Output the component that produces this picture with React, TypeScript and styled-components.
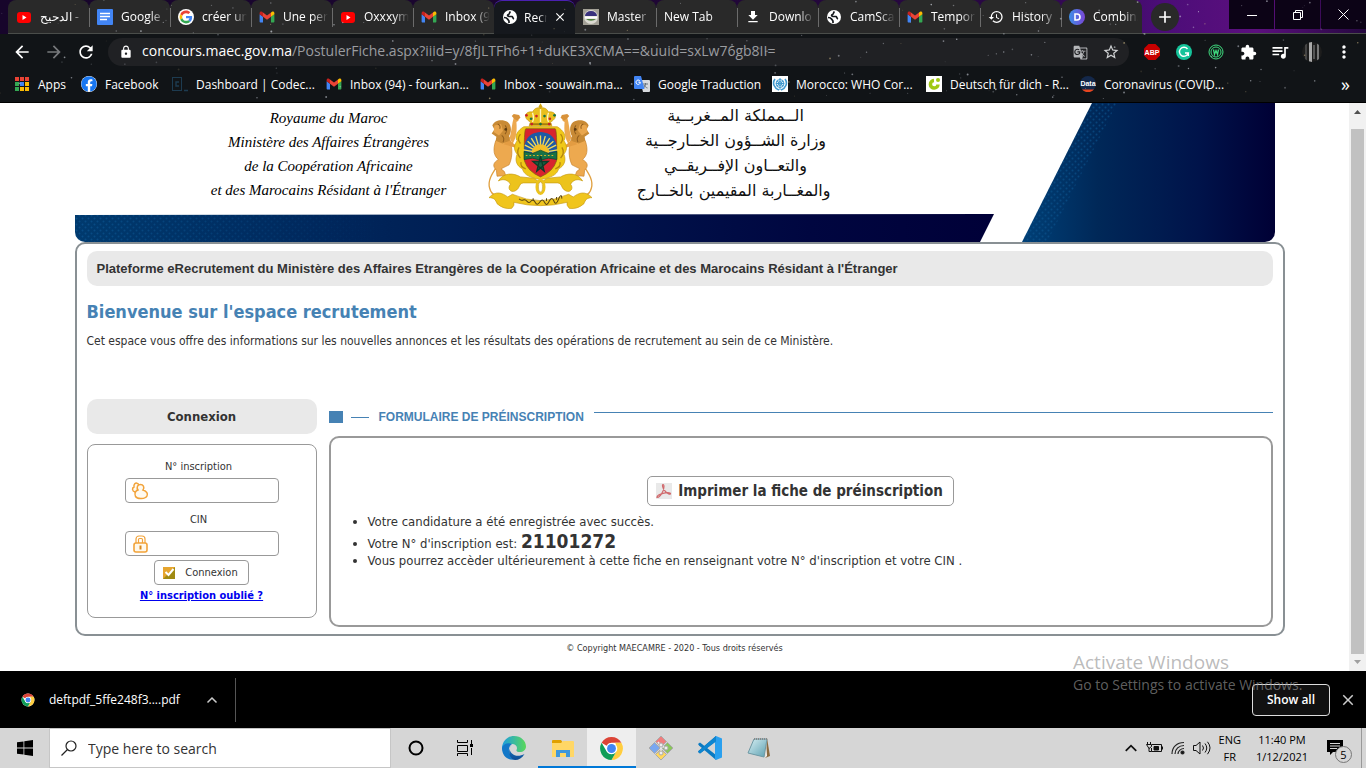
import React from 'react';
import styled, { createGlobalStyle, css } from 'styled-components';
import {
  MdLock, MdRefresh, MdArrowBack, MdArrowForward, MdStarBorder, MdGTranslate,
  MdExtension, MdQueueMusic, MdHistory, MdDownload, MdClose, MdAdd, MdMoreVert,
} from 'react-icons/md';
import { FaFacebook } from 'react-icons/fa';

const ui = '"Open Sans", "Noto Sans", sans-serif';
const tahoma = '"DejaVu Sans Condensed", "DejaVu Sans", sans-serif';
const arial = '"Liberation Sans", Arial, sans-serif';

const GlobalStyle = createGlobalStyle`
  * { box-sizing: border-box; }
  body { margin: 0; background: #fff; font-family: ${ui}; }
  button { font: inherit; color: inherit; background: none; border: 0; padding: 0; cursor: pointer; }
  svg { display: block; flex: none; }
  h1, h2, p, ul { margin: 0; padding: 0; }
`;

const Screen = styled.div`
  position: relative;
  display: flex;
  flex-direction: column;
  min-height: 100vh;
  overflow: hidden;
`;

/* ---------- Browser chrome ---------- */

const Chrome = styled.header`
  position: relative;
  color: #fff;
  background: #111417;
  border-bottom: 1px solid #000;
`;

const StarField = styled.svg`
  position: absolute;
  inset: 0;
  width: 100%;
  height: 100%;
  pointer-events: none;
`;

const TabStrip = styled.div`
  display: flex;
  height: 34px;
  padding-left: 8px;
  background: linear-gradient(90deg, #17052b 0, #1b0530 40%, #2a0845 75%, #4b0d78 85%, #5c0f7e 92%, #25083f 100%);
`;

const TabButton = styled.button<{ $active?: boolean }>`
  position: relative;
  display: flex;
  align-items: center;
  flex: 0 1 81px;
  gap: 8px;
  min-width: 0;
  padding: 0 4px 0 8px;
  font-size: 12px;
  text-align: left;
  border-radius: 8px 8px 0 0;
  background: #292929;
  border-bottom: 1px solid #4a4d4a;
  & + &::before {
    content: '';
    position: absolute;
    left: 0;
    top: 8px;
    height: 19px;
    width: 1px;
    background: #6b6b6b;
  }
  ${p => p.$active && css`
    gap: 6px;
    background: #15181d;
    border-bottom-color: #15181d;
    border-top: 1px solid #4a20b0;
    padding-right: 8px;
    &&::before { display: none; }
    & + button::before { display: none; }
  `}
`;

const TabTitle = styled.span`
  flex: 1;
  min-width: 0;
  overflow: hidden;
  white-space: nowrap;
  mask-image: linear-gradient(90deg, #000 65%, transparent);
`;

const StripRest = styled.div`
  display: flex;
  flex: 1;
  justify-content: space-between;
  border-bottom: 1px solid #4a4d4a;
`;

const NewTab = styled.button`
  display: grid;
  place-items: center;
  width: 28px;
  height: 28px;
  margin: 3px 0 0 9px;
  border-radius: 50%;
  background: #292929;
`;

const WindowControls = styled.div`
  display: flex;
  gap: 1px;
  height: 29px;
`;

const WindowButton = styled.button`
  display: grid;
  place-items: center;
  width: 45px;
  background: #0c0316;
`;

const Toolbar = styled.div`
  display: flex;
  align-items: center;
  height: 36px;
  padding: 0 12px 0 12px;
  gap: 12px;
`;

const ToolButton = styled.button<{ $dim?: boolean }>`
  display: grid;
  place-items: center;
  flex: none;
  width: 20px;
  height: 20px;
  color: ${p => (p.$dim ? '#77797c' : '#fff')};
`;

const Omnibox = styled.div`
  display: flex;
  align-items: center;
  flex: 1;
  min-width: 0;
  height: 28px;
  margin-right: 1px;
  padding: 0 8px 0 11px;
  gap: 11px;
  border-radius: 14px;
  background: #202124;
`;

const Url = styled.div`
  flex: 1;
  min-width: 0;
  overflow: hidden;
  white-space: nowrap;
  font-size: 14px;
  line-height: 20px;
  padding-bottom: 2px;
  margin-left: -2px;
  color: #9a9ca0;
  b { font-weight: 400; color: #fff; }
`;

const Bookmarks = styled.nav`
  display: flex;
  align-items: center;
  height: 32px;
  padding: 0 16px 4px 13px;
  font-size: 12px;
`;

const Bookmark = styled.a<{ $w: number }>`
  display: flex;
  align-items: center;
  flex: 0 1 ${p => p.$w}px;
  min-width: 0;
  gap: 8px;
  color: #fff;
  text-decoration: none;
  white-space: nowrap;
`;

const More = styled.button`
  margin-left: auto;
  font-size: 18px;
  line-height: 18px;
`;

/* ---------- Web page ---------- */

const Viewport = styled.div`
  display: flex;
  flex: 1;
  background: #fff;
`;

const Page = styled.main`
  flex: 1;
  min-width: 0;
  color: #333;
  font-family: ${tahoma};
`;

const Container = styled.div`
  width: 89%;
  max-width: 1200px;
  margin: 0 auto;
`;

const Banner = styled.div`
  position: relative;
  display: flex;
  height: 139px;
  padding-left: 134px;
  overflow: hidden;
  border-radius: 0 0 10px 10px;
`;

const BannerArt = styled.svg`
  position: absolute;
  inset: 0;
  width: 100%;
  height: 100%;
`;

const FrenchName = styled.div`
  position: relative;
  width: 240px;
  padding-top: 3px;
  font: italic 15px/24px "Liberation Serif", serif;
  color: #000;
  text-align: center;
  white-space: nowrap;
`;

const Emblem = styled.svg`
  position: relative;
  margin: 0 0 0 38px;
`;

const ArabicName = styled.div`
  position: relative;
  width: 190px;
  margin-left: 47px;
  font: 16px/25px "DejaVu Sans", sans-serif;
  color: #111;
  text-align: center;
  white-space: nowrap;
`;

const Frame = styled.section`
  margin-right: -10px;
  padding: 7px 10px;
  border: 2px solid #899094;
  border-radius: 10px;
`;

const Pill = styled.h2<{ $center?: boolean }>`
  height: 35px;
  padding: 0 10px;
  border-radius: 10px;
  background: #e9e9e9;
  font: bold 13px/35px ${arial};
  white-space: nowrap;
  ${p => p.$center && css`
    font: bold 13px/35px ${tahoma};
    text-align: center;
  `}
`;

const Welcome = styled.h1`
  margin-top: 14px;
  font-size: 18px;
  line-height: 24px;
  color: #4682b4;
`;

const Intro = styled.p`
  margin-top: 9px;
  font-size: 12px;
  line-height: 16px;
`;

const Columns = styled.div`
  display: grid;
  grid-template-columns: 230px 1fr;
  gap: 12px;
  margin-top: 50px;
`;

const Login = styled.form`
  display: flex;
  flex-direction: column;
  align-items: center;
  gap: 4px;
  margin-top: 10px;
  padding: 15px 14px 14px;
  border: 1px solid #999;
  border-radius: 8px;
  font-size: 11px;
  line-height: 14px;
`;

const Label = styled.label<{ $spaced?: boolean }>`
  margin-top: ${p => (p.$spaced ? 6 : 0)}px;
  padding-right: 6px;
`;

const Field = styled.div`
  display: flex;
  align-items: center;
  width: 154px;
  height: 25px;
  padding: 0 5px;
  border: 1px solid #999;
  border-radius: 4px;
`;

const FieldInput = styled.input`
  flex: 1;
  min-width: 0;
  margin-left: 4px;
  border: 0;
  outline: 0;
  background: none;
  font: inherit;
`;

const LoginButton = styled.button`
  display: flex;
  align-items: center;
  gap: 10px;
  height: 25px;
  padding: 0 10px 0 8px;
  border: 1px solid #999;
  border-radius: 4px;
`;

const Forgot = styled.a`
  font-weight: bold;
  color: #00e;
`;

const SectionHead = styled.div`
  display: flex;
  align-items: center;
  height: 36px;
  margin-bottom: 1px;
  &::before {
    content: '';
    width: 14px;
    height: 12px;
    background: #4682b4;
  }
`;

const Dash = styled.span`
  width: 18px;
  height: 1px;
  margin: 0 10px 0 8px;
  background: #4682b4;
`;

const Rule = styled.span`
  flex: 1;
  align-self: flex-start;
  height: 1px;
  margin: 13px 0 0 10px;
  background: #4682b4;
`;

const SectionTitle = styled.h2`
  font: bold 12px/16px ${arial};
  color: #4682b4;
`;

const Result = styled.div`
  display: flex;
  flex-direction: column;
  align-items: center;
  min-height: 191px;
  padding: 38px 37px 20px;
  border: 2px solid #999;
  border-radius: 10px;
`;

const PrintButton = styled.button`
  display: flex;
  align-items: center;
  gap: 6px;
  height: 30px;
  padding: 0 10px 0 8px;
  border: 1px solid #999;
  border-radius: 5px;
  font-size: 15px;
  font-weight: bold;
`;

const Messages = styled.ul`
  align-self: stretch;
  margin-top: 8px;
  font-size: 13px;
  line-height: 16px;
  strong { font-size: 19px; line-height: 23px; }
`;

const Copyright = styled.footer`
  padding: 5px 0 16px;
  font-size: 9px;
  line-height: 14px;
  text-align: center;
`;

const Scrollbar = styled.div`
  display: flex;
  flex-direction: column;
  align-items: center;
  justify-content: space-between;
  width: 17px;
  padding: 7px 2px 7px;
  background: #f1f1f1;
`;

const Thumb = styled.div`
  flex: 1;
  width: 13px;
  margin: 15px 0 6px;
  background: #c1c1c1;
`;

/* ---------- Download shelf, taskbar ---------- */

const Shelf = styled.div`
  display: flex;
  align-items: center;
  height: 57px;
  padding: 0 9px 0 21px;
  background: #000;
  color: #fff;
  font-size: 12px;
`;

const Download = styled.button`
  display: flex;
  align-items: center;
  gap: 14px;
  height: 44px;
  padding-right: 17px;
  border-right: 1px solid #555;
  svg:last-child { margin-left: 12px; }
`;

const ShowAll = styled.button`
  width: 78px;
  height: 32px;
  margin: 0 9px 0 auto;
  border: 1px solid #ddd;
  border-radius: 4px;
  background: #111;
  font-weight: 600;
`;

const Watermark = styled.div`
  position: absolute;
  right: 57px;
  bottom: 72px;
  min-width: 236px;
  color: rgba(150, 150, 150, 0.65);
  font-size: 14px;
  line-height: 22px;
  pointer-events: none;
`;

const WatermarkTitle = styled.div`
  font-size: 19px;
  line-height: 24px;
`;

const Taskbar = styled.footer`
  display: flex;
  height: 40px;
  background: #d6d6d6;
  color: #000;
`;

const TaskButton = styled.button<{ $open?: boolean; $active?: boolean }>`
  display: grid;
  place-items: center;
  flex: none;
  width: 49px;
  border: solid transparent;
  border-width: 3px 0;
  ${p => p.$open && css`
    border-bottom-color: #0078d7;
    border-bottom-width: 2px;
    background-clip: padding-box;
  `}
  ${p => p.$active && css`background-color: #eee; border-top-color: #eee;`}
`;

const Search = styled.label`
  display: flex;
  align-items: center;
  flex: 0 1 342px;
  gap: 9px;
  min-width: 0;
  margin: 0;
  padding-left: 11px;
  border: 1px solid #c6c6c6;
  background: #fff;
`;

const SearchInput = styled.input`
  flex: 1;
  min-width: 0;
  border: 0;
  outline: 0;
  background: none;
  font: 14px ${ui};
  &::placeholder { color: #333; opacity: 1; }
`;

const Tray = styled.div`
  display: flex;
  align-items: center;
  gap: 8px;
  margin-left: auto;
  font-size: 11px;
  line-height: 17px;
  text-align: center;
`;

const Clock = styled.div`
  width: 66px;
`;

const Notifications = styled.button`
  position: relative;
  margin: 0 2px 0 4px;
  padding-right: 8px;
`;

const Badge = styled.span`
  position: absolute;
  left: 8px;
  top: 6px;
  width: 17px;
  height: 17px;
  border: 1px solid #777;
  border-radius: 50%;
  background: #d6d6d6;
  font-size: 11px;
  line-height: 15px;
`;

const Edge = styled.div`
  align-self: stretch;
  width: 5px;
  border-left: 1px solid #999;
`;

/* ---------- Drawings ---------- */

const Globe = () => (
  <svg width="16" height="16" viewBox="0 0 16 16">
    <circle cx="8" cy="8" r="7" fill="#fff" />
    <path d="M8.500 2.500C7 3.500 8 5 6.500 5.500S5.500 7 7 7.500h3c1 .5.500 2 2 2.500" stroke="#15181d" strokeWidth="1.700" fill="none" />
    <path d="M2 8.500c2 0 3 .5 3.500 1.500S7 11 7 12.500V14" stroke="#15181d" strokeWidth="1.700" fill="none" />
  </svg>
);

const Gmail = () => (
  <svg width="16" height="16" viewBox="-1 -3 26 24">
    <path fill="#4285f4" d="M1.600 18h3.900V8.700L0 4.600v11.800c0 .9.7 1.600 1.600 1.600" />
    <path fill="#34a853" d="M18.500 18h3.900c.9 0 1.600-.7 1.600-1.600V4.600l-5.500 4.100" />
    <path fill="#fbbc04" d="M18.500 1.600v7.100L24 4.600V2.400c0-2-2.300-3.200-3.900-2" />
    <path fill="#ea4335" d="M5.500 8.700V1.600L12 6.500l6.500-4.900v7.100L12 13.600" />
    <path fill="#c5221f" d="M0 2.400v2.200l5.500 4.100V1.600L3.900.4C2.300-.8 0 .4 0 2.400" />
  </svg>
);

const Docs = () => (
  <svg width="16" height="16" viewBox="0 0 16 16">
    <rect width="16" height="16" rx="1" fill="#4285f4" />
    <path d="M3 4.500h10M3 7.500h10M3 10.500h7" stroke="#fff" strokeWidth="1.500" />
  </svg>
);

const Google = () => (
  <svg width="16" height="16" viewBox="-6 -6 60 60">
    <circle cx="24" cy="24" r="30" fill="#fff" />
    <path fill="#ea4335" d="M24 9.500c3.540 0 6.710 1.220 9.210 3.600l6.850-6.850C35.900 2.380 30.470 0 24 0 14.620 0 6.510 5.380 2.560 13.220l7.980 6.190C12.430 13.720 17.740 9.500 24 9.500z" />
    <path fill="#4285f4" d="M46.980 24.550c0-1.570-.15-3.090-.38-4.550H24v9.020h12.940c-.58 2.960-2.260 5.480-4.780 7.180l7.730 6c4.510-4.180 7.090-10.360 7.090-17.650z" />
    <path fill="#fbbc05" d="M10.530 28.590c-.48-1.450-.76-2.990-.76-4.590s.27-3.140.76-4.590l-7.980-6.190C.92 16.460 0 20.120 0 24s.92 7.540 2.560 10.780l7.970-6.190z" />
    <path fill="#34a853" d="M24 48c6.480 0 11.930-2.130 15.890-5.810l-7.730-6c-2.150 1.450-4.920 2.300-8.160 2.300-6.260 0-11.570-4.220-13.470-9.910l-7.980 6.190C6.510 42.620 14.620 48 24 48z" />
  </svg>
);

const ChromeLogo = ({ size }: { size: number }) => (
  <svg width={size} height={size} viewBox="0 0 48 48">
    <circle cx="24" cy="24" r="22" fill="#fff" />
    <path fill="#db4437" d="M24 2a22 22 0 0 1 19.050 11H24a11 11 0 0 0-9.530 5.500L5 13A22 22 0 0 1 24 2z" />
    <path fill="#ffcd40" d="M43.050 13A22 22 0 0 1 24 46l9.530-16.500A11 11 0 0 0 33.500 18.500L31 13z" />
    <path fill="#0f9d58" d="M5 13a22 22 0 0 0 19 33l9.500-16.500a11 11 0 0 1-19.030 0z" />
    <circle cx="24" cy="24" r="10.500" fill="#fff" />
    <circle cx="24" cy="24" r="8.500" fill="#4285f4" />
  </svg>
);

const YouTube = () => (
  <svg width="16" height="16" viewBox="0 0 16 16">
    <rect x="1" y="3" width="14" height="11" rx="3" fill="#f00" />
    <path d="M6.500 6v5l4-2.500z" fill="#fff" />
  </svg>
);

const MasterIcon = () => (
  <svg width="16" height="16" viewBox="0 0 16 16">
    <rect width="16" height="16" fill="#a3a096" />
    <circle cx="8" cy="8" r="7" fill="#dcdad2" />
    <path d="M2 7a6 5 0 0 1 12 0z" fill="#39317c" />
    <path d="M3 10h10a6 4 0 0 1-10 0z" fill="#4d7d3c" />
    <path d="M2 8.500h12" stroke="#fff" strokeWidth="2" />
  </svg>
);

const DBadge = () => (
  <svg width="16" height="16" viewBox="0 0 16 16">
    <defs><linearGradient id="dg"><stop stopColor="#3d8fe8" /><stop offset="1" stopColor="#7a45d6" /></linearGradient></defs>
    <circle cx="8" cy="8" r="8" fill="url(#dg)" />
    <path d="M6 5h2a3 3 0 0 1 0 6H6z" fill="none" stroke="#fff" strokeWidth="1.600" />
  </svg>
);

const Apps = () => (
  <svg width="17" height="16" viewBox="0 0 17 16">
    {['#ea4335', '#ea4335', '#ea4335', '#34a853', '#4285f4', '#fbbc04', '#34a853', '#fbbc04', '#fbbc04'].map((c, i) => (
      <rect key={i} x={2 + (i % 3) * 5} y={1 + Math.floor(i / 3) * 5} width="4" height="4" fill={c} />
    ))}
  </svg>
);

const Codecademy = () => (
  <svg width="16" height="16" viewBox="0 0 16 16" fill="none" stroke="#1d3b50">
    <rect x="0.500" y="1.500" width="9" height="13" />
    <path d="M7 6H4v4h3M12 14.500h4" strokeWidth="1.400" />
  </svg>
);

const Translate = () => (
  <svg width="16" height="16" viewBox="0 0 16 16">
    <path d="M6 4h9a1 1 0 0 1 1 1v10a1 1 0 0 1-1 1H9z" fill="#d8dade" />
    <path d="M9 8h5M11.500 7v1c0 2-1 3-2 4M10 9c1 2 2 2.500 3.500 3" stroke="#67727e" fill="none" />
    <path d="M1 0h6l3.500 13H1a1 1 0 0 1-1-1V1a1 1 0 0 1 1-1z" fill="#4285f4" />
    <path d="M6.500 6.300H4.500M6.400 6.400A2.200 2.200 0 1 1 5.800 4.700" stroke="#fff" fill="none" />
  </svg>
);

const Who = () => (
  <svg width="16" height="16" viewBox="0 0 16 16">
    <rect width="16" height="16" fill="#fff" />
    <g fill="none" stroke="#3f9ad0">
      <circle cx="8" cy="7.500" r="4" /><circle cx="8" cy="7.500" r="2" />
      <path d="M8 2v12M4 7.500h8M5 5l6 5M11 5l-6 5" />
      <path d="M3 3C0 7 2 12 7 14M13 3c3 4 1 9-4 11" strokeWidth="1.600" />
    </g>
  </svg>
);

const Goethe = () => (
  <svg width="16" height="16" viewBox="0 0 16 16">
    <rect width="16" height="16" fill="#fff" />
    <path d="M8 4.500a3.800 3.800 0 1 0 4 4" stroke="#a0c814" strokeWidth="3.500" fill="none" />
    <circle cx="12" cy="4" r="2" fill="#a0c814" />
  </svg>
);

const DataIcon = () => (
  <svg width="16" height="16" viewBox="0 0 16 16">
    <circle cx="8" cy="8" r="8" fill="#14284a" />
    <path d="M2 13.500h12a8 8 0 0 1-12 0z" fill="#e8451e" />
    <text x="8" y="9.500" fill="#fff" fontFamily="Liberation Sans" fontWeight="700" fontSize="7" textAnchor="middle">Data</text>
  </svg>
);

const Abp = () => (
  <svg width="18" height="18" viewBox="0 0 18 18">
    <path d="M5.500 1h7L17 5.500v7L12.500 17h-7L1 12.500v-7z" fill="#c70000" />
    <text x="9" y="12" fill="#fff" fontFamily="Liberation Sans" fontWeight="700" fontSize="7" textAnchor="middle">ABP</text>
  </svg>
);

const Grammarly = () => (
  <svg width="16" height="16" viewBox="0 0 16 16">
    <circle cx="8" cy="8" r="8" fill="#15c39a" />
    <path d="M11.500 5A4.500 4.500 0 1 0 12.300 9H9M12.300 9v3" stroke="#fff" strokeWidth="1.400" fill="none" />
  </svg>
);

const GreenW = () => (
  <svg width="16" height="16" viewBox="0 0 16 16" fill="none" stroke="#3fdc7f">
    <circle cx="8" cy="8" r="7" /><circle cx="8" cy="8" r="5" />
    <path d="M5.500 5.500l1 5L8 6.500l1.500 4 1-5" strokeWidth="1.300" />
  </svg>
);

const Avatar = () => (
  <svg width="20" height="20" viewBox="0 0 20 20">
    <defs><clipPath id="av"><circle cx="10" cy="10" r="10" /></clipPath></defs>
    <g clipPath="url(#av)">
      <rect width="20" height="20" fill="#1d1d1d" />
      <path d="M4 0v20" stroke="#444" strokeWidth="2" />
      <path d="M8.500 0v20" stroke="#aaa" strokeWidth="3" />
      <path d="M12 3v14" stroke="#555" strokeWidth="2" />
      <path d="M16 0v20" stroke="#777" strokeWidth="2" />
    </g>
  </svg>
);

const Stars = () => {
  const dots = [];
  let seed = 7;
  const next = () => { seed = (seed * 16807) % 2147483647; return seed / 2147483647; };
  for (let i = 0; i < 190; i++) {
    dots.push(<circle key={i} cx={`${next() * 100}%`} cy={next() * 101} r={0.400 + next() * 0.600} opacity={0.150 + next() * 0.500} fill={i % 7 ? '#dfe4ee' : '#d7c08a'} />);
  }
  return <StarField aria-hidden="true">{dots}</StarField>;
};

const CoatOfArms = () => {
  const lion = (
    <g>
      <path d="M84 190C70 212 50 236 58 262C62 278 70 282 78 284" fill="none" stroke="#e0a040" strokeWidth="4" />
      <path d="M118 110C124 90 124 70 130 50L146 44L144 60L138 64C140 90 138 112 126 130Z" fill="#eda94f" />
      <path d="M76 120C66 150 72 166 84 176C68 186 66 196 78 208L80 226L106 224L102 212L92 204L116 192C130 164 124 130 116 108Z" fill="#eda94f" stroke="#c98228" strokeWidth="2" />
      <path d="M100 130L140 142L146 128L134 132L114 116Z" fill="#e39c42" />
      <path d="M66 74C72 58 96 54 112 64C126 76 122 96 116 106L118 120L96 128L76 120L78 108L64 98L72 86Z" fill="#c88a35" />
      <path d="M72 74L92 70L98 90L86 104L70 94Z" fill="#e9a64d" />
      <path d="M82 70q10 4 6 14M104 74q10 12 0 26M94 104q10 8 4 20" stroke="#8f5c1c" strokeWidth="3" fill="none" />
      <circle cx="106" cy="86" r="4" fill="#5b3a10" />
      <path d="M124 46l6-6 16 3 4 8-10 8-8-4z" fill="#d8923a" />
    </g>
  );
  return (
    <Emblem width="107" height="107" viewBox="50 7 320 320" role="img" aria-label="Armoiries du Royaume du Maroc">
      {lion}
      <g transform="matrix(-1 0 0 1 420 0)">{lion}</g>
      <path d="M84 240C100 214 130 216 150 228L190 232Q210 250 230 232L270 228C290 216 320 214 336 240C320 232 306 238 300 250C310 262 300 276 286 270C270 262 276 248 262 246L158 246C144 248 150 262 134 270C120 276 110 262 120 250C114 238 100 232 84 240Z" fill="#ecc31c" stroke="#c79a12" strokeWidth="2" />
      <path d="M160 78C140 90 132 106 140 120C126 140 134 152 140 160C132 180 140 196 156 204C160 224 186 232 210 236C234 232 260 224 264 204C280 196 288 180 280 160C286 152 294 140 280 120C288 106 280 90 260 78Z" fill="#f0c818" stroke="#c79a12" strokeWidth="2" />
      <path d="M150 100q-12 14 0 28M146 140q-10 16 4 32M152 184q-4 14 14 20M270 100q12 14 0 28M274 140q10 16-4 32M268 184q4 14-14 20" fill="none" stroke="#b4860e" strokeWidth="4" />
      <path d="M166 84H254Q260 90 258 180Q248 212 210 228Q172 212 162 180Q160 90 166 84Z" fill="#d8232f" stroke="#7a5c10" strokeWidth="2" />
      <path d="M162 158C158 126 170 96 210 94C250 96 262 126 258 158Z" fill="#1d5aa6" />
      <g stroke="#f4da5a" strokeWidth="4">
        {[-80, -64, -48, -32, -16, 0, 16, 32, 48, 64, 80].map(a => <path key={a} d="M210 156V104" transform={`rotate(${a} 210 156)`} />)}
      </g>
      <path d="M184 156a26 26 0 0 1 52 0z" fill="#f2bf2a" />
      <path d="M161 152L186 158L210 148L234 158L259 152V176L234 172L210 178L186 172L161 176Z" fill="#187246" stroke="#0c3f28" strokeWidth="2" />
      <path d="M166 164H254" stroke="#e2b52a" strokeWidth="3" strokeDasharray="5 6" />
      <path d="M210 166L221 211L187 182H233L199 211Z" fill="#1b6040" stroke="#0f3b29" strokeWidth="4" />
      <path d="M176 76L180 64C154 50 166 30 186 34Q194 18 210 22Q226 18 234 34C254 30 266 50 240 64L244 76Z" fill="#e9bf1e" stroke="#c79a12" strokeWidth="2" />
      <path d="M186 36Q192 52 186 64M210 24V64M234 36Q228 52 234 64" stroke="#fff3c0" strokeWidth="4" fill="none" />
      <path d="M210 8L216 18L210 26L204 18Z" fill="#d3a512" />
      <path d="M178 70H242" stroke="#a87d0c" strokeWidth="5" />
      {[[168, 44], [182, 54], [198, 46], [222, 46], [238, 54], [252, 44], [184, 70], [210, 70], [236, 70]].map(([x, y], i) => (
        <circle key={i} cx={x} cy={y} r="4" fill={i % 2 ? '#187246' : '#c8202c'} />
      ))}
      <ellipse cx="210" cy="258" rx="11" ry="20" fill="none" stroke="#ecc31c" strokeWidth="8" />
      <ellipse cx="210" cy="258" rx="6" ry="15" fill="#fff" stroke="#c79a12" strokeWidth="2" />
      <path d="M56 290C76 268 96 276 112 288L126 280Q210 318 294 280L308 288C324 276 344 268 364 290C350 290 344 296 340 308Q320 326 296 322Q286 312 290 304Q210 324 130 304Q134 312 124 322Q100 326 80 308C76 296 70 290 56 290Z" fill="#f0c51c" stroke="#c79a12" strokeWidth="2" />
      <path d="M146 294q6 6 12 3t12 4 12-1 12 4 14-1 14 1 14-3 14-1 14-5 10-2M188 292v8M228 292v8M258 288v8" fill="none" stroke="#5a4610" strokeWidth="3" />
    </Emblem>
  );
};

const BannerShapes = () => (
  <BannerArt viewBox="0 0 1200 139" preserveAspectRatio="none" aria-hidden="true">
    <defs>
      <linearGradient id="band"><stop stopColor="#003a6e" /><stop offset="0.350" stopColor="#002257" /><stop offset="0.800" stopColor="#000640" /><stop offset="1" stopColor="#000038" /></linearGradient>
      <linearGradient id="wing"><stop stopColor="#004077" /><stop offset="0.300" stopColor="#002858" /><stop offset="0.700" stopColor="#00134a" /><stop offset="1" stopColor="#000035" /></linearGradient>
      <pattern id="dots" width="6" height="6" patternUnits="userSpaceOnUse">
        <circle cx="1.500" cy="1.500" r="1" fill="#0c5590" /><circle cx="4.500" cy="4.500" r="1" fill="#0c5590" />
      </pattern>
      <linearGradient id="fade"><stop stopColor="#fff" /><stop offset="1" stopColor="#000" /></linearGradient>
      <mask id="fadeMask"><rect y="111" width="320" height="28" fill="url(#fade)" /></mask>
    </defs>
    <path d="M0 112L919 111L905 139H0Z" fill="url(#band)" />
    <rect y="112" width="320" height="27" fill="url(#dots)" mask="url(#fadeMask)" opacity="0.700" />
    <path d="M1017 0H1200V139H947Z" fill="url(#wing)" />
    <path d="M1017 0H1042L972 139H947Z" fill="url(#dots)" opacity="0.600" />
  </BannerArt>
);

const People = () => (
  <svg width="18" height="18" viewBox="0 0 18 18" fill="#fffaf0" stroke="#f2a33a" strokeWidth="1.500">
    <path d="M4 10C1 9 .8 6 3 5C2.500 2 4.500.8 6 1.200C8 1.500 8 4 7 5L6 9Z" />
    <path d="M7 8C5 5 7 2.500 9.500 2.500S14 5 12 8C16 9 17 12 16 14C14.500 17 6.500 17.500 4.500 14.500C3 11.500 4.500 9 7 8Z" />
  </svg>
);

const Padlock = () => (
  <svg width="18" height="18" viewBox="0 0 18 18" fill="none" stroke="#f2a33a" strokeWidth="1.600">
    <path d="M5 8V4a3 3 0 0 1 3-3h3a3 3 0 0 1 3 3v4M7.500 8V4.500a1 1 0 0 1 1-1h2a1 1 0 0 1 1 1V8" strokeWidth="1.200" />
    <rect x="3" y="8" width="13" height="9" rx="2" fill="#fff8ea" />
    <path d="M9.500 10.500v4" strokeWidth="2" stroke="#d98a1e" />
  </svg>
);

const Check = () => (
  <svg width="12" height="12" viewBox="0 0 12 12">
    <rect width="12" height="12" fill="#e6a52e" /><path d="M12 0v12H0z" fill="#a08a12" />
    <path d="M2.500 5l3 3 5-6" stroke="#fff" strokeWidth="2" fill="none" />
  </svg>
);

const Pdf = () => (
  <svg width="16" height="16" viewBox="0 0 16 16">
    <rect width="16" height="16" fill="#e9e9e9" />
    <path d="M7 1.500c1.500 0 1 4 0 6.500C5.500 11.500 3 14.500 1 14.500c-.5-1.500 3-3.500 6-4.200 3-.8 7.500-1 7.500.4 0 1.300-4-.4-5.800-3C6.500 5 6 1.500 7 1.500z" fill="none" stroke="#d0696c" strokeWidth="1.200" />
  </svg>
);

const EdgeLogo = () => (
  <svg width="24" height="24" viewBox="0 0 24 24">
    <defs>
      <linearGradient id="e1"><stop stopColor="#1c9de0" /><stop offset="1" stopColor="#5ad85a" /></linearGradient>
      <linearGradient id="e2" x2="0" y2="1"><stop stopColor="#1b83d0" /><stop offset="1" stopColor="#0d4b92" /></linearGradient>
    </defs>
    <path d="M0 11C1 4 6 0 12 0c7 0 12 5 12 10.500 0 3.500-3 5.500-6 5.500-2.500 0-4-1-3.500-2C16 11 14 8 10 8 5 8 1 11 0 15z" fill="url(#e1)" />
    <path d="M0 12c1-4 6-6 10-4-2 1-3.500 4-3 7 .8 5 5 8 9 7.500C9 26 0 22 0 12z" fill="#1378c8" />
    <path d="M10 8.500c-3 3-3 6 0 9s8 3 12.500.5C20 22 17 24 13 24 7 23 5 14 10 8.500z" fill="url(#e2)" />
  </svg>
);

const Explorer = () => (
  <svg width="22" height="20" viewBox="0 0 22 20">
    <path d="M0 2a1 1 0 0 1 1-1h8l2 3H0z" fill="#e0a000" />
    <path d="M0 4h9l2-2h10a1 1 0 0 1 1 1v15H0z" fill="#ffd766" />
    <path d="M4 18v-7h14v7h-4v-4H8v4z" fill="#3f97db" />
  </svg>
);

const Git = () => (
  <svg width="26" height="26" viewBox="0 0 26 26" stroke="#aaa">
    <path d="M13 1l5.500 5.500-5.500 5.500-5.500-5.500z" fill="#ef7d7d" /><path d="M19.500 7.500L25 13l-5.500 5.500L14 13z" fill="#8ac65c" />
    <path d="M6.500 7.500L12 13l-5.500 5.500L1 13z" fill="#7aa7f0" /><path d="M13 14l5.500 5.500L13 25l-5.500-5.500z" fill="#ffd75c" />
    <path d="M10 7l3 4v8M13 11l5 2" stroke="#eee" strokeWidth="1.500" fill="none" />
    <g fill="#eee"><circle cx="13" cy="10" r="2" /><circle cx="13" cy="18" r="2" /><circle cx="18" cy="13" r="2" /></g>
  </svg>
);

const VsCode = () => (
  <svg width="24" height="24" viewBox="0 0 24 24">
    <path d="M0 8l2-1.500L18 19v5L1 9.500z" fill="#0a7ac2" />
    <path d="M0 16l2 1.500L18 5V0L1 14.500z" fill="#0b68ad" />
    <path d="M18 0l6 2.500v19L18 24l-1-1V1z" fill="#2aa0ef" />
    <path d="M2 17.500L18 5.500V0L0 15.500z" fill="#0e86d0" />
  </svg>
);

const Notepad = () => (
  <svg width="24" height="22" viewBox="0 0 24 22">
    <defs><linearGradient id="np" x2="1" y2="1"><stop stopColor="#d8f0f4" /><stop offset="1" stopColor="#5c9fb0" /></linearGradient></defs>
    <path d="M20 1l3 18-5 2z" fill="#8a6a40" /><path d="M19 2l1 17-2 2z" fill="#f4f4f4" />
    <path d="M7 2h13l-3 18L1 16z" fill="url(#np)" stroke="#6d98a4" />
    <path d="M7 2h13" stroke="#888" strokeWidth="2" strokeDasharray="1 1" />
  </svg>
);

const Up = ({ color, size }: { color: string; size: number }) => (
  <svg width={size} height={size} viewBox="0 0 12 12" fill="none" stroke={color} strokeWidth="1.500"><path d="M1.500 8.500L6 4l4.500 4.500" /></svg>
);

const tabs: { icon?: React.ReactNode; title: string; active?: boolean }[] = [
  { icon: <YouTube />, title: 'الدحيح -' },
  { icon: <Docs />, title: 'Google' },
  { icon: <Google />, title: 'créer un' },
  { icon: <Gmail />, title: 'Une per' },
  { icon: <YouTube />, title: 'Oxxxym' },
  { icon: <Gmail />, title: 'Inbox (9' },
  { icon: <Globe />, title: 'Recr', active: true },
  { icon: <MasterIcon />, title: 'Master' },
  { title: 'New Tab' },
  { icon: <MdDownload size={16} />, title: 'Downlo' },
  { icon: <Globe />, title: 'CamSca' },
  { icon: <Gmail />, title: 'Tempor' },
  { icon: <MdHistory size={16} />, title: 'History' },
  { icon: <DBadge />, title: 'Combin.' },
];

const bookmarks: { icon: React.ReactNode; title: string; w: number }[] = [
  { icon: <Apps />, title: 'Apps', w: 68 },
  { icon: <FaFacebook size={16} color="#1877f2" style={{ background: '#fff', borderRadius: 8 }} />, title: 'Facebook', w: 91 },
  { icon: <Codecademy />, title: 'Dashboard | Codec...', w: 154 },
  { icon: <Gmail />, title: 'Inbox (94) - fourkan...', w: 154 },
  { icon: <Gmail />, title: 'Inbox - souwain.ma...', w: 154 },
  { icon: <Translate />, title: 'Google Traduction', w: 138 },
  { icon: <Who />, title: 'Morocco: WHO Cor...', w: 154 },
  { icon: <Goethe />, title: 'Deutsch für dich - R...', w: 154 },
  { icon: <DataIcon />, title: 'Coronavirus (COVID...', w: 154 },
];

export default function App() {
  return (
    <Screen>
      <GlobalStyle />
      <Chrome>
        <TabStrip>
          {tabs.map(t => (
            <TabButton key={t.title} $active={t.active}>
              {t.icon}
              <TabTitle>{t.title}</TabTitle>
              {t.active && <MdClose size={14} />}
            </TabButton>
          ))}
          <StripRest>
            <NewTab aria-label="New tab"><MdAdd size={20} /></NewTab>
            <WindowControls>
              <WindowButton aria-label="Minimize"><svg width="10" height="10"><path d="M0 5.500h10" stroke="#fff" /></svg></WindowButton>
              <WindowButton aria-label="Restore">
                <svg width="10" height="10" fill="none" stroke="#fff"><path d="M.5 2.500h7v7h-7zM2.500 2.500v-2h7v7h-2" /></svg>
              </WindowButton>
              <WindowButton aria-label="Close"><svg width="11" height="11"><path d="M.5.5l10 10M10.500.5l-10 10" stroke="#fff" /></svg></WindowButton>
            </WindowControls>
          </StripRest>
        </TabStrip>
        <Toolbar>
          <ToolButton aria-label="Back"><MdArrowBack size={20} /></ToolButton>
          <ToolButton aria-label="Forward" $dim><MdArrowForward size={20} /></ToolButton>
          <ToolButton aria-label="Reload"><MdRefresh size={20} /></ToolButton>
          <Omnibox>
            <MdLock size={14} />
            <Url><b>concours.maec.gov.ma</b>/PostulerFiche.aspx?iiid=y/8fJLTFh6+1+duKE3XCMA==&amp;uuid=sxLw76gb8II=</Url>
            <ToolButton aria-label="Translate"><MdGTranslate size={15} color="#b4b6b9" /></ToolButton>
            <ToolButton aria-label="Bookmark"><MdStarBorder size={18} color="#d0d2d4" /></ToolButton>
          </Omnibox>
          <ToolButton aria-label="Adblock Plus"><Abp /></ToolButton>
          <ToolButton aria-label="Grammarly"><Grammarly /></ToolButton>
          <ToolButton aria-label="W"><GreenW /></ToolButton>
          <ToolButton aria-label="Extensions"><MdExtension size={17} /></ToolButton>
          <ToolButton aria-label="Media"><MdQueueMusic size={20} /></ToolButton>
          <ToolButton aria-label="Profile"><Avatar /></ToolButton>
          <ToolButton aria-label="Menu"><MdMoreVert size={20} /></ToolButton>
        </Toolbar>
        <Bookmarks>
          {bookmarks.map(b => <Bookmark key={b.title} href="#" $w={b.w}>{b.icon}{b.title}</Bookmark>)}
          <More>»</More>
        </Bookmarks>
        <Stars />
      </Chrome>

      <Viewport>
        <Page>
          <Container>
            <Banner>
              <BannerShapes />
              <FrenchName lang="fr">Royaume du Maroc<br />Ministère des Affaires Étrangères<br />de la Coopération Africaine<br />et des Marocains Résidant à l'Étranger</FrenchName>
              <CoatOfArms />
              <ArabicName lang="ar" dir="rtl">الــمملكة المــغربــية<br />وزارة الشــؤون الخــارجــية<br />والتعــاون الإفــريقــي<br />والمغــاربة المقيمين بالخــارج</ArabicName>
            </Banner>
            <Frame>
              <Pill>Plateforme eRecrutement du Ministère des Affaires Etrangères de la Coopération Africaine et des Marocains Résidant à l'Étranger</Pill>
              <Welcome>Bienvenue sur l'espace recrutement</Welcome>
              <Intro>Cet espace vous offre des informations sur les nouvelles annonces et les résultats des opérations de recrutement au sein de ce Ministère.</Intro>
              <Columns>
                <div>
                  <Pill $center>Connexion</Pill>
                  <Login onSubmit={e => e.preventDefault()}>
                    <Label htmlFor="inscription">N° inscription</Label>
                    <Field><People /><FieldInput id="inscription" /></Field>
                    <Label htmlFor="cin" $spaced>CIN</Label>
                    <Field><Padlock /><FieldInput id="cin" type="password" /></Field>
                    <LoginButton type="submit"><Check />Connexion</LoginButton>
                    <Forgot href="#">N° inscription oublié ?</Forgot>
                  </Login>
                </div>
                <div>
                  <SectionHead>
                    <Dash />
                    <SectionTitle>FORMULAIRE DE PRÉINSCRIPTION</SectionTitle>
                    <Rule />
                  </SectionHead>
                  <Result>
                    <PrintButton><Pdf />Imprimer la fiche de préinscription</PrintButton>
                    <Messages>
                      <li>Votre candidature a été enregistrée avec succès.</li>
                      <li>Votre N° d'inscription est: <strong>21101272</strong></li>
                      <li>Vous pourrez accèder ultérieurement à cette fiche en renseignant votre N° d'inscription et votre CIN .</li>
                    </Messages>
                  </Result>
                </div>
              </Columns>
            </Frame>
            <Copyright>© Copyright MAECAMRE - 2020 - Tous droits réservés</Copyright>
          </Container>
        </Page>
        <Scrollbar aria-hidden="true">
          <svg width="7" height="4"><path d="M0 4L3.500 0 7 4z" fill="#505050" /></svg>
          <Thumb />
          <svg width="7" height="4"><path d="M0 0l3.500 4L7 0z" fill="#a0a0a0" /></svg>
        </Scrollbar>
      </Viewport>

      <Shelf>
        <Download><ChromeLogo size={14} />deftpdf_5ffe248f3....pdf<Up color="#ccc" size={12} /></Download>
        <ShowAll>Show all</ShowAll>
        <button aria-label="Close"><MdClose size={18} color="#ccc" /></button>
      </Shelf>

      <Taskbar>
        <TaskButton aria-label="Start">
          <svg width="16" height="16" viewBox="0 0 16 16"><path d="M0 2.300L6.500 1.400v6.200H0zM7.300 1.300L16 0v7.600H7.300zM0 8.400h6.500v6.200L0 13.700zM7.300 8.400H16V16l-8.700-1.300z" /></svg>
        </TaskButton>
        <Search>
          <svg width="16" height="16" viewBox="0 0 16 16" fill="none" stroke="#222" strokeWidth="1.200"><circle cx="10" cy="6" r="5" /><path d="M6.500 9.500L.5 15.500" /></svg>
          <SearchInput placeholder="Type here to search" aria-label="Type here to search" />
        </Search>
        <TaskButton aria-label="Cortana"><svg width="16" height="16"><circle cx="8" cy="8" r="6.500" fill="none" stroke="#000" strokeWidth="2" /></svg></TaskButton>
        <TaskButton aria-label="Task view">
          <svg width="18" height="16" fill="none" stroke="#000"><path d="M1.500 0v2.500h10V0M1.500 16v-2.500h10V16M1.500 5.500h10v6h-10zM15.500 0v4M15.500 8v7" /><path d="M14 4h3v3h-3z" fill="#000" stroke="none" /></svg>
        </TaskButton>
        <TaskButton aria-label="Edge"><EdgeLogo /></TaskButton>
        <TaskButton aria-label="File Explorer" $open><Explorer /></TaskButton>
        <TaskButton aria-label="Chrome" $open $active><ChromeLogo size={25} /></TaskButton>
        <TaskButton aria-label="Git"><Git /></TaskButton>
        <TaskButton aria-label="Visual Studio Code"><VsCode /></TaskButton>
        <TaskButton aria-label="Notepad"><Notepad /></TaskButton>
        <Tray>
          <Up color="#111" size={14} />
          <svg width="17" height="14" viewBox="0 0 17 14" fill="none" stroke="#111"><path d="M6 3.500h9.500v7h-10V7M16.500 5.500v3" /><path d="M8 5.500h4.500v3.500H8z" fill="#111" /><path d="M1.500 1v2M4.500 1v2M.5 3.500h5v2l-2.500 2zM3 7v3.500h2.500" /></svg>
          <svg width="14" height="14" viewBox="0 0 14 14" fill="none" stroke="#222" strokeWidth="1.200"><path d="M1 13C1 6 6 1.500 13 1.500M4 13c0-5 4-8.500 9-8.500M7 13c0-3 3-5.500 6-5.500" /><circle cx="11.500" cy="11.500" r="1.500" fill="#111" /></svg>
          <svg width="18" height="14" viewBox="0 0 18 14" fill="none" stroke="#111"><path d="M.5 4.500H3L7 1v12L3 9.500H.5zM9.500 4.500q2 2.500 0 5M12 2.500q3.500 4.500 0 9M14.500.8q5 6 0 12.400" /></svg>
          <div>ENG<br />FR</div>
          <Clock>11:40 PM<br />1/12/2021</Clock>
          <Notifications aria-label="5 notifications">
            <svg width="16" height="16" viewBox="0 0 16 16"><path d="M0 0h16v12H6l-3 3v-3H0z" /><path d="M3 3.500h10M3 6h10M3 8.500h7" stroke="#d6d6d6" /></svg>
            <Badge>5</Badge>
          </Notifications>
          <Edge />
        </Tray>
      </Taskbar>
      <Watermark><WatermarkTitle>Activate Windows</WatermarkTitle>Go to Settings to activate Windows.</Watermark>
    </Screen>
  );
}
